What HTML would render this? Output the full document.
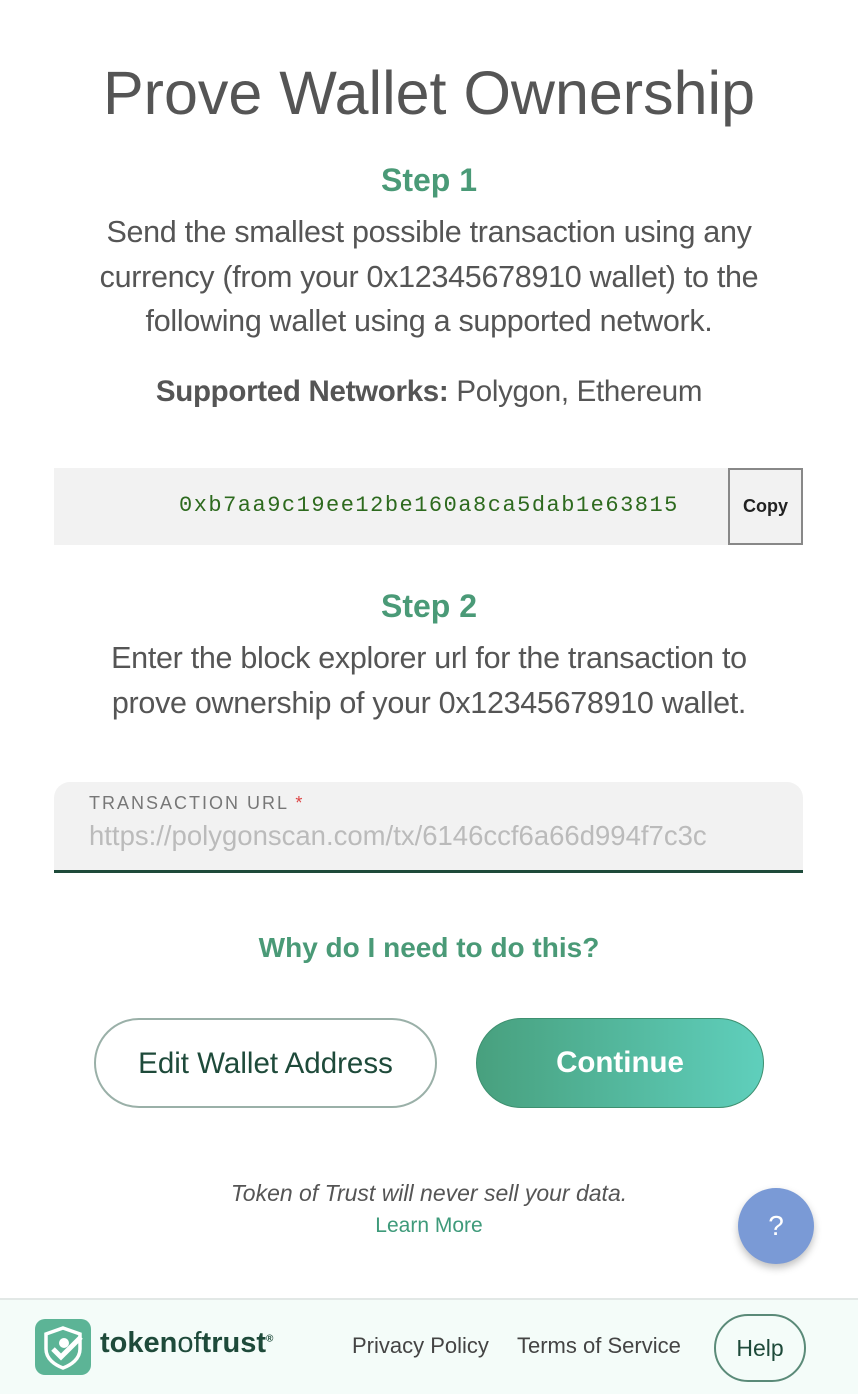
<!DOCTYPE html>
<html><head><meta charset="utf-8"><style>
*{box-sizing:border-box;margin:0;padding:0}
body{width:858px;height:1394px;background:#fff;font-family:"Liberation Sans",sans-serif;position:relative;overflow:hidden;color:#555}
.c{position:absolute;left:0;width:858px;text-align:center}
h1{font-weight:400;font-size:61px;color:#555}
.step{font-weight:700;font-size:32px;color:#4a9a77}
.p{font-size:30.5px;line-height:44.5px;color:#555;letter-spacing:-0.3px}
.addr{position:absolute;left:54px;top:468px;width:749px;height:77px;background:#f2f2f2}
.addr span{position:absolute;left:125px;top:25px;font-family:"Liberation Mono",monospace;font-size:22px;letter-spacing:1.5px;color:#2d6a1e}
.copy{position:absolute;right:0;top:0;width:75px;height:77px;border:2px solid #888;background:#f2f2f2;font-size:18px;font-weight:700;color:#222;text-align:center;line-height:73px}
.inp{position:absolute;left:54px;top:782px;width:749px;height:91px;background:#f2f2f2;border-radius:16px 16px 0 0;border-bottom:3px solid #1e4a3a}
.lab{position:absolute;left:35px;top:11px;font-size:18px;letter-spacing:2px;color:#777}
.lab b{color:#d44;font-weight:400}
.ph{position:absolute;left:35px;top:38px;font-size:27.5px;color:#bbb;white-space:nowrap;overflow:hidden;width:695px}
.btn{position:absolute;top:1018px;height:90px;border-radius:45px;font-size:29.5px;text-align:center;line-height:88px}
.b1{left:94px;width:343px;border:2px solid #9ab0a8;color:#1e4a3a}
.b2{left:476px;width:288px;background:linear-gradient(90deg,#48a07e,#5fcfbc);color:#fff;font-weight:700;border:1px solid #3e9070}
.q{position:absolute;left:738px;top:1188px;width:76px;height:76px;border-radius:50%;background:#7a9ad6;color:#fff;font-size:28px;text-align:center;line-height:76px;box-shadow:0 4px 8px rgba(0,0,0,.25)}
.foot{position:absolute;left:0;top:1298px;width:858px;height:96px;background:#f4fcf9;border-top:2px solid #e2e8e6}
.fl{position:absolute;top:33px;font-size:22px;color:#444}
.help{position:absolute;left:714px;top:14px;width:92px;height:68px;border:2px solid #5a8a78;border-radius:34px;text-align:center;line-height:64px;font-size:23px;color:#1e4a3a}
</style></head><body>
<div class="c" style="top:58px"><h1>Prove Wallet Ownership</h1></div>
<div class="c step" style="top:162px">Step 1</div>
<div class="c p" style="top:210px">Send the smallest possible transaction using any<br>currency (from your 0x12345678910 wallet) to the<br>following wallet using a supported network.</div>
<div class="c p" style="top:370px;font-size:29.5px"><b>Supported Networks:</b> Polygon, Ethereum</div>
<div class="addr"><span>0xb7aa9c19ee12be160a8ca5dab1e63815</span><div class="copy">Copy</div></div>
<div class="c step" style="top:588px">Step 2</div>
<div class="c p" style="top:636px">Enter the block explorer url for the transaction to<br>prove ownership of your 0x12345678910 wallet.</div>
<div class="inp"><div class="lab">TRANSACTION URL <b>*</b></div><div class="ph">https://polygonscan.com/tx/6146ccf6a66d994f7c3c</div></div>
<div class="c" style="top:932px;font-size:28px;font-weight:700;color:#4a9a77">Why do I need to do this?</div>
<div class="btn b1">Edit Wallet Address</div>
<div class="btn b2">Continue</div>
<div class="c" style="top:1180px;font-size:23px;font-style:italic;color:#555">Token of Trust will never sell your data.</div>
<div class="c" style="top:1214px;font-size:21px;color:#3e9a7a">Learn More</div>
<div class="q">?</div>
<div class="foot">
<svg style="position:absolute;left:35px;top:19px" width="56" height="56" viewBox="0 0 56 56"><rect width="56" height="56" rx="10" fill="#5cb496"/><path d="M28 9 L45 15 V30 C45 40 36 46 28 49 C20 46 11 40 11 30 V15 Z" fill="none" stroke="#fff" stroke-width="3.5"/><circle cx="29" cy="24" r="5" fill="#fff"/><path d="M18 30 L26 38 L46 18" fill="none" stroke="#fff" stroke-width="5"/></svg>
<div style="position:absolute;left:100px;top:27px;font-size:29px;color:#1e4a3a;font-weight:700">token<span style="font-weight:400">of</span>trust<sup style="font-size:10px">®</sup></div>
<div class="fl" style="left:352px">Privacy Policy</div>
<div class="fl" style="left:517px">Terms of Service</div>
<div class="help">Help</div>
</div>
</body></html>
